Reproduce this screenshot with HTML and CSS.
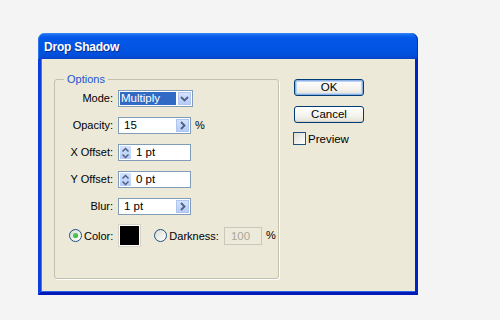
FILE: index.html
```html
<!DOCTYPE html>
<html>
<head>
<meta charset="utf-8">
<link rel="stylesheet" href="styles.css">
</head>
<body>
<div class="window">
  <div class="titlebar"><span class="title">Drop Shadow</span></div>
  <div class="client">
    <div class="group">
      <span class="legend">Options</span>
      <div class="grid">
        <label class="lbl">Mode:</label>
        <div class="select">
          <span class="sel-text">Multiply</span>
          <span class="btn-blue drop">
            <svg width="9" height="6" viewBox="0 0 9 6"><path d="M1 1 L4.5 4.5 L8 1" fill="none" stroke="#4D6185" stroke-width="1.8"/></svg>
          </span>
        </div>

        <label class="lbl">Opacity:</label>
        <div class="ctl">
          <div class="input w73">
            <span class="val">15</span>
            <span class="btn-blue arrow">
              <svg width="6" height="9" viewBox="0 0 6 9"><path d="M1 1 L4.5 4.5 L1 8" fill="none" stroke="#4D6185" stroke-width="1.8"/></svg>
            </span>
          </div>
          <span class="unit">%</span>
        </div>

        <label class="lbl">X Offset:</label>
        <div class="input w73">
          <span class="spin">
            <svg width="9" height="12" viewBox="0 0 9 12"><path d="M1.5 4.5 L4.5 1.5 L7.5 4.5 M1.5 7.5 L4.5 10.5 L7.5 7.5" fill="none" stroke="#4D6185" stroke-width="1.5"/></svg>
          </span>
          <span class="val">1 pt</span>
        </div>

        <label class="lbl">Y Offset:</label>
        <div class="input w73">
          <span class="spin">
            <svg width="9" height="12" viewBox="0 0 9 12"><path d="M1.5 4.5 L4.5 1.5 L7.5 4.5 M1.5 7.5 L4.5 10.5 L7.5 7.5" fill="none" stroke="#4D6185" stroke-width="1.5"/></svg>
          </span>
          <span class="val">0 pt</span>
        </div>

        <label class="lbl">Blur:</label>
        <div class="input w73">
          <span class="val">1 pt</span>
          <span class="btn-blue arrow">
            <svg width="6" height="9" viewBox="0 0 6 9"><path d="M1 1 L4.5 4.5 L1 8" fill="none" stroke="#4D6185" stroke-width="1.8"/></svg>
          </span>
        </div>
      </div>

      <div class="color-row">
        <span class="radio checked"><span class="dot"></span></span>
        <span class="rlabel">Color:</span>
        <span class="swatch"></span>
        <span class="radio r2"></span>
        <span class="rlabel">Darkness:</span>
        <span class="input disabled"><span class="val">100</span></span>
        <span class="unit">%</span>
      </div>
    </div>

    <div class="side">
      <div class="button default">OK</div>
      <div class="button">Cancel</div>
      <div class="check-row"><span class="checkbox"></span><span>Preview</span></div>
    </div>
  </div>
</div>
</body>
</html>
```

FILE: styles.css
```css
html, body {
  margin: 0;
  padding: 0;
  background: #F4F4F4;
}
body {
  font-family: "Liberation Sans", Arial, sans-serif;
  font-size: 11px;
  color: #000;
  padding: 33px 0 0 38px;
}
.window {
  width: 380px;
}
.titlebar {
  height: 26px;
  border-radius: 7px 7px 0 0;
  background: linear-gradient(to bottom, #3A8CF6 0px, #1266EE 2px, #0458E8 5px, #0254E4 14px, #0250DC 22px, #0343C6 26px);
  display: flex;
  align-items: center;
  padding-left: 6px;
  box-sizing: border-box;
  box-shadow: inset 1px 0 0 #2B74F0, inset -1px 0 0 #0035B8;
}
.title {
  color: #fff;
  font-weight: bold;
  font-size: 12px;
  letter-spacing: -0.2px;
  text-shadow: 1px 1px 0 #0A2F8E;
  padding-top: 1px;
}
.client {
  background: #ECE9D8;
  border: 3px solid #0831D9;
  border-top: none;
  border-left-color: #0B3EDD;
  border-right-color: #0023C4;
  border-bottom-color: #0019B8;
  height: 213px;
  display: flex;
  padding: 20px 0 0 13px;
  box-sizing: content-box;
  box-shadow: inset 1px 0 0 #3B7BEA, inset 0 -1px 0 #2C63E0;
}
.group {
  position: relative;
  width: 223px;
  height: 198px;
  border: 1px solid #C3C1AE;
  border-radius: 3px;
  box-shadow: 1px 1px 0 #fff;
}
.legend {
  position: absolute;
  top: -7px;
  left: 9px;
  padding: 0 3px;
  background: #ECE9D8;
  color: #1C54D6;
  font-size: 11px;
  line-height: 13px;
}
.grid {
  display: grid;
  grid-template-columns: 58px auto;
  column-gap: 5px;
  row-gap: 10px;
  padding-top: 10px;
  align-items: center;
  justify-items: start;
}
.lbl {
  justify-self: end;
  line-height: 17px;
}
.ctl {
  display: flex;
  align-items: center;
  gap: 4px;
}
.unit {
  line-height: 17px;
}
.select {
  width: 73px;
  height: 15px;
  border: 1px solid #7F9DB9;
  background: #fff;
  display: flex;
  align-items: stretch;
  padding: 0;
}
.sel-text {
  flex: 1;
  background: #316AC5;
  color: #fff;
  margin: 1px 1px 1px 1px;
  padding-left: 1px;
  line-height: 13px;
  font-size: 11.5px;
}
.btn-blue {
  background: linear-gradient(to bottom, #D4E2FC, #B6CCF7);
  border: 1px solid #B0C6F1;
  display: flex;
  align-items: center;
  justify-content: center;
  box-sizing: border-box;
}
.drop {
  width: 13px;
  margin: 1px;
  box-sizing: border-box;
}
.input {
  height: 17px;
  border: 1px solid #7F9DB9;
  background: #fff;
  box-sizing: border-box;
  display: flex;
  align-items: stretch;
}
.w73 {
  width: 73px;
}
.val {
  flex: 1;
  padding-left: 5px;
  line-height: 15px;
  font-size: 11.5px;
}
.arrow {
  width: 13px;
  margin: 1px;
}
.spin {
  width: 11px;
  margin: 1px 0 1px 1px;
  background: linear-gradient(to bottom, #D4E2FC, #B6CCF7);
  display: flex;
  align-items: center;
  justify-content: center;
}
.color-row {
  display: flex;
  align-items: center;
  padding: 9px 0 0 14px;
  height: 23px;
}
.radio {
  width: 11px;
  height: 11px;
  border: 1px solid #1C5180;
  border-radius: 50%;
  background: linear-gradient(135deg, #DCDCD4, #fff);
  display: flex;
  align-items: center;
  justify-content: center;
  flex: none;
}
.dot {
  width: 5px;
  height: 5px;
  border-radius: 50%;
  background: radial-gradient(circle at 40% 40%, #5CD35C, #21A121);
}
.rlabel {
  margin-left: 2px;
}
.swatch {
  width: 21px;
  height: 21px;
  background: #000;
  border: 1px solid #D6D3C6;
  margin-left: 5px;
  box-shadow: 0 0 0 1px #fff inset;
  flex: none;
}
.r2 {
  margin-left: 13px;
}
.disabled {
  width: 38px;
  height: 18px;
  border-color: #C9C7BA;
  background: #EBEADB;
  margin-left: 5px;
  margin-right: 4px;
  color: #ACA899;
}
.disabled .val {
  padding-left: 6px;
  line-height: 16px;
}
.side {
  margin-left: 15px;
  display: flex;
  flex-direction: column;
  gap: 10px;
}
.button {
  width: 70px;
  height: 17px;
  box-sizing: border-box;
  border: 1px solid #003C74;
  border-radius: 3px;
  background: linear-gradient(to bottom, #FFFFFF, #F3F2EC 60%, #E3E1D6);
  text-align: center;
  line-height: 15px;
  font-size: 11.5px;
  box-shadow: inset 0 -1px 0 #D6D0C5;
}
.default {
  box-shadow: inset 0 0 0 1px #8DB2E3, inset 0 0 0 2px #BCD4F6;
}
.check-row {
  display: flex;
  align-items: center;
  gap: 2px;
  margin-left: -1px;
  margin-top: -1px;
  font-size: 11.5px;
}
.checkbox {
  width: 11px;
  height: 11px;
  border: 1px solid #1C5180;
  background: linear-gradient(135deg, #DCDCD4, #fff);
}
```
